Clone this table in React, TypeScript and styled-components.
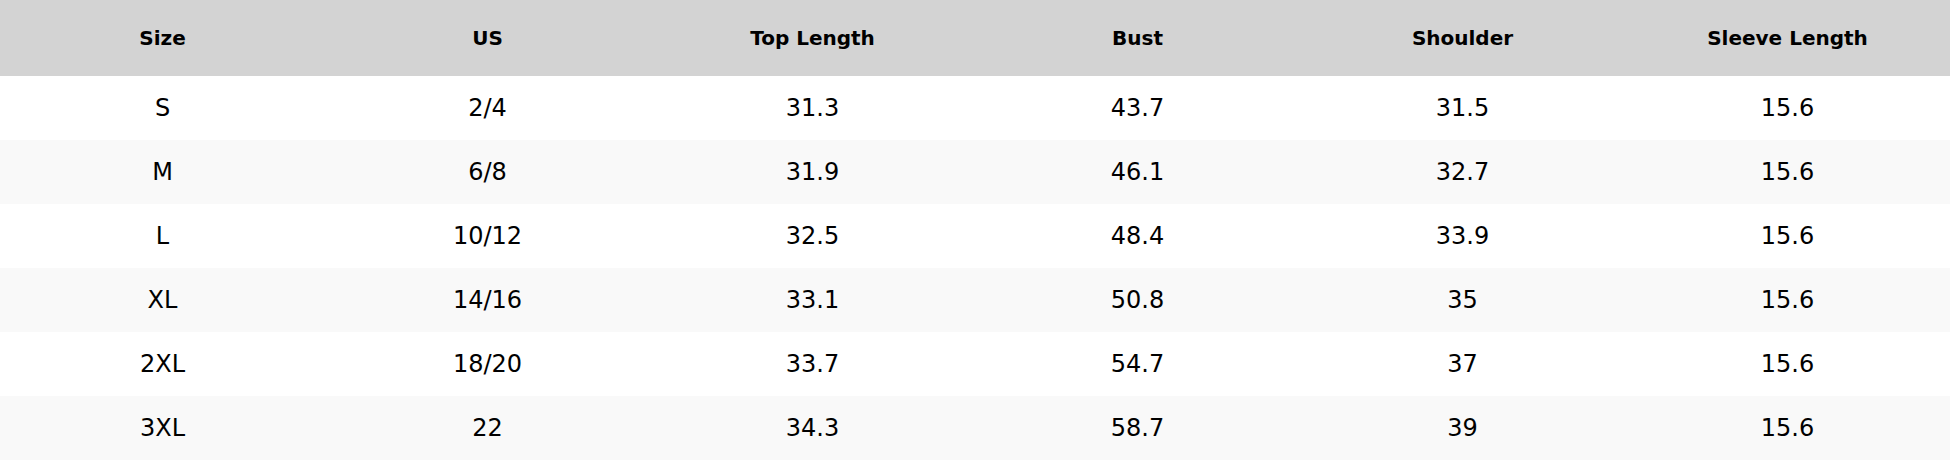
import { createGlobalStyle } from "styled-components";
import styled from "styled-components";

const GlobalStyle = createGlobalStyle`
    html, body {
        margin: 0;
        padding: 0;
        background-color: #fff;
    }
`;

const columns = ["Size", "US", "Top Length", "Bust", "Shoulder", "Sleeve Length"];

const rows = [
    ["S", "2/4", "31.3", "43.7", "31.5", "15.6"],
    ["M", "6/8", "31.9", "46.1", "32.7", "15.6"],
    ["L", "10/12", "32.5", "48.4", "33.9", "15.6"],
    ["XL", "14/16", "33.1", "50.8", "35", "15.6"],
    ["2XL", "18/20", "33.7", "54.7", "37", "15.6"],
    ["3XL", "22", "34.3", "58.7", "39", "15.6"],
];

export default function App() {
    return (
        <>
            <GlobalStyle />
            <SizeTable>
                <thead>
                    <tr>
                        {columns.map((col) => (
                            <HeaderCell key={col}>{col}</HeaderCell>
                        ))}
                    </tr>
                </thead>
                <tbody>
                    {rows.map((row, i) => (
                        <BodyRow key={row[0]} $striped={i % 2 === 1}>
                            {row.map((value, j) => (
                                <Cell key={j}>{value}</Cell>
                            ))}
                        </BodyRow>
                    ))}
                </tbody>
            </SizeTable>
        </>
    );
}

const SizeTable = styled.table`
    width: 100%;
    border-collapse: collapse;
    table-layout: fixed;
    font-family: "DejaVu Sans", sans-serif;
    color: #000;
`;

const HeaderCell = styled.th`
    height: 76px;
    padding: 0;
    background-color: #d3d3d3;
    font-size: 20px;
    font-weight: bold;
    text-align: center;
    vertical-align: middle;
`;

const BodyRow = styled.tr<{ $striped: boolean }>`
    background-color: ${({ $striped }) => ($striped ? "#f9f9f9" : "#fff")};
`;

const Cell = styled.td`
    height: 64px;
    padding: 0;
    font-size: 24px;
    text-align: center;
    vertical-align: middle;
`;
